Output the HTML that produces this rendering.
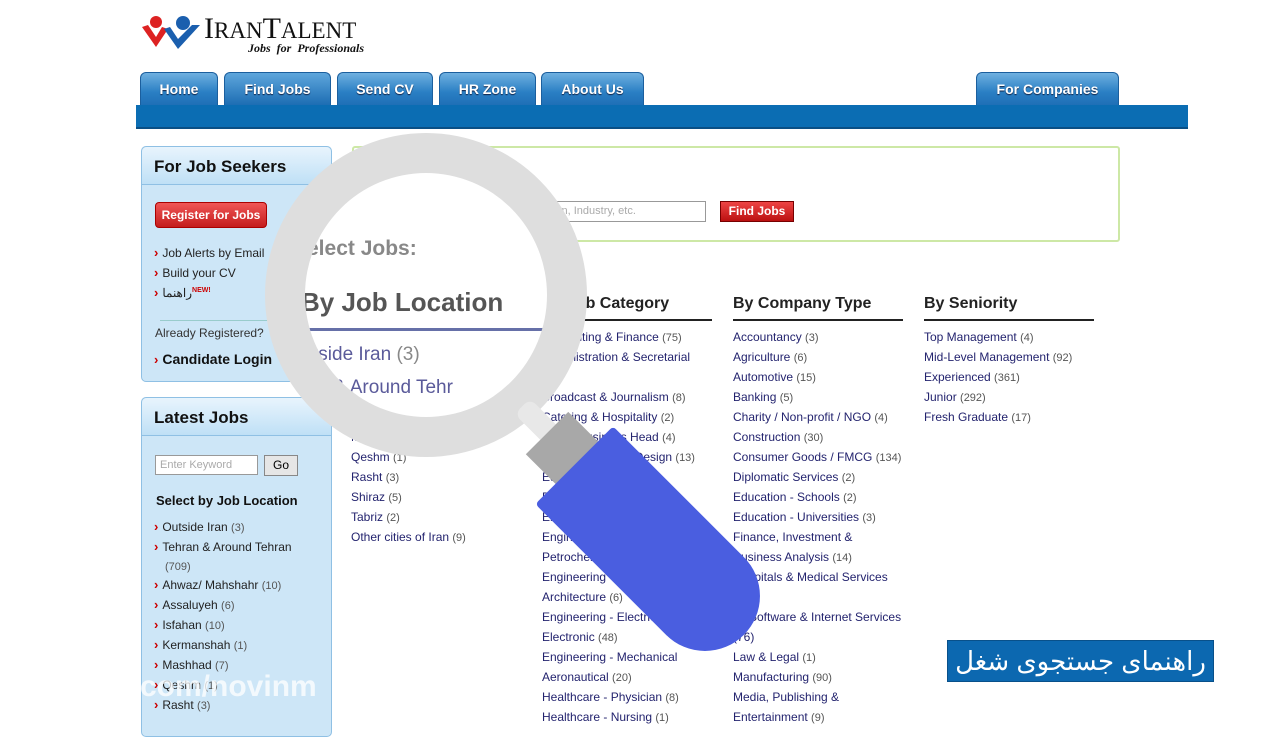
<!DOCTYPE html>
<html><head><meta charset="utf-8">
<style>
*{margin:0;padding:0;box-sizing:border-box}
body{width:1280px;height:720px;overflow:hidden;background:#fff;font-family:"Liberation Sans",Arial,sans-serif;position:relative}
.abs{position:absolute}
.tab{position:absolute;top:72px;height:33px;border-radius:6px 6px 0 0;background:linear-gradient(#6fb0e0,#2a7fc4 60%,#1f6fb6);border:1px solid #1b5f9e;border-bottom:none;color:#fff;font-weight:bold;font-size:14px;text-align:center;line-height:32px;text-shadow:0 1px 1px #124;}
.tab.act{background:linear-gradient(#5ea6dc,#1d6db3);}
.bar{left:136px;top:105px;width:1052px;height:24px;background:#0b6db3;border-bottom:2px solid #0a4f85}
.box{position:absolute;left:141px;width:191px;background:#cde6f7;border:1px solid #8fc0e4;border-radius:5px}
.boxh{height:38px;background:linear-gradient(#e8f4fd,#bfe0f6);border-bottom:1px solid #8fc0e4;font-weight:bold;font-size:17px;line-height:40px;padding-left:12px;color:#111;border-radius:5px 5px 0 0}
.li{position:absolute;font-size:12px;color:#222;white-space:nowrap}
.li b{color:#c00;font-size:13px;margin-right:4px;font-weight:900}
.cnt{color:#555;font-size:11px}
.col{position:absolute;top:295px}
.col h3{font-size:16px;font-weight:bold;color:#222;height:26px;border-bottom:2px solid #222;}
.col div{font-size:12px;color:#23236e;height:20px;line-height:20px;white-space:nowrap}
.col div span{color:#555;font-size:11px}
</style></head><body>
<svg class="abs" style="left:140px;top:15px" width="66" height="36" viewBox="0 0 66 36">
<circle cx="16" cy="7" r="6" fill="#d22"/><path d="M2 12 L16 32 L28 14 L22 12 L16 22 L8 10Z" fill="#d22"/>
<circle cx="43" cy="8" r="7" fill="#1b5fae"/><path d="M24 14 L38 34 L60 10 L52 10 L38 24 L30 12Z" fill="#1b5fae"/>
</svg>
<div class="abs" style="left:204px;top:12px;font-family:'Liberation Serif',serif;font-size:30px;color:#111">I<span style="font-size:23px">RAN</span>T<span style="font-size:23px">ALENT</span></div>
<div class="abs" style="left:248px;top:41px;font-family:'Liberation Serif',serif;font-style:italic;font-weight:bold;font-size:12px;color:#111">Jobs &nbsp;for &nbsp;Professionals</div>

<div class="tab" style="left:140px;width:78px">Home</div>
<div class="tab act" style="left:224px;width:107px">Find Jobs</div>
<div class="tab" style="left:337px;width:96px">Send CV</div>
<div class="tab" style="left:439px;width:97px">HR Zone</div>
<div class="tab" style="left:541px;width:103px">About Us</div>
<div class="tab" style="left:976px;width:143px">For Companies</div>
<div class="abs bar"></div>

<div class="box" style="top:146px;height:236px">
<div class="boxh">For Job Seekers</div>
<div class="abs" style="left:13px;top:55px;width:112px;height:26px;background:linear-gradient(#f05555,#c41d1d);border:1px solid #a00;border-radius:4px;color:#fff;font-weight:bold;font-size:12px;line-height:24px;text-align:center">Register for Jobs</div>
<div class="li" style="left:12px;top:98px"><b>›</b>Job Alerts by Email</div>
<div class="li" style="left:12px;top:118px"><b>›</b>Build your CV</div>
<div class="li" style="left:12px;top:138px;font-family:'Liberation Sans','Noto Sans CJK SC',sans-serif"><b>›</b>راهنما<sup style="color:#c00;font-size:7px;font-weight:bold">NEW!</sup></div>
<div class="abs" style="left:18px;top:173px;width:160px;border-top:1px solid #9cc"></div>
<div class="li" style="left:13px;top:179px;color:#333">Already Registered?</div>
<div class="li" style="left:12px;top:204px;font-weight:bold;font-size:14px;color:#111"><b>›</b>Candidate Login</div>
</div>

<div class="box" style="top:397px;height:340px">
<div class="boxh">Latest Jobs</div>
<div class="abs" style="left:13px;top:57px;width:103px;height:20px;background:#fff;border:1px solid #999;font-size:11px;color:#aaa;line-height:18px;padding-left:4px">Enter Keyword</div>
<div class="abs" style="left:122px;top:57px;width:34px;height:21px;background:#e6e6e6;border:1px solid #888;font-size:12px;line-height:19px;text-align:center">Go</div>
<div class="li" style="left:14px;top:95px;font-weight:bold;font-size:13px;color:#111">Select by Job Location</div>
<div class="li" style="left:12px;top:121px"><b>›</b>Outside Iran <span class="cnt">(3)</span></div>
<div class="li" style="left:12px;top:141px"><b>›</b>Tehran &amp; Around Tehran</div>
<div class="li" style="left:23px;top:161px"><span class="cnt">(709)</span></div>
<div class="li" style="left:12px;top:179px"><b>›</b>Ahwaz/ Mahshahr <span class="cnt">(10)</span></div>
<div class="li" style="left:12px;top:199px"><b>›</b>Assaluyeh <span class="cnt">(6)</span></div>
<div class="li" style="left:12px;top:219px"><b>›</b>Isfahan <span class="cnt">(10)</span></div>
<div class="li" style="left:12px;top:239px"><b>›</b>Kermanshah <span class="cnt">(1)</span></div>
<div class="li" style="left:12px;top:259px"><b>›</b>Mashhad <span class="cnt">(7)</span></div>
<div class="li" style="left:12px;top:279px"><b>›</b>Qeshm <span class="cnt">(1)</span></div>
<div class="li" style="left:12px;top:299px"><b>›</b>Rasht <span class="cnt">(3)</span></div>
</div>

<div class="abs" style="left:352px;top:146px;width:768px;height:96px;border:2px solid #cde8a6;border-radius:3px"></div>
<div class="abs" style="left:540px;top:201px;width:166px;height:21px;border:1px solid #999;font-size:11px;color:#aaa;line-height:19px;padding-left:4px">ision, Industry, etc.</div>
<div class="abs" style="left:720px;top:201px;width:74px;height:21px;background:linear-gradient(#e44,#b11);border:1px solid #700;color:#fff;font-weight:bold;font-size:12px;text-align:center;line-height:19px">Find Jobs</div>

<div class="col" style="left:351px;width:170px">
<h3>By Job Location</h3><div style="margin-top:6px">Outside Iran <span>(3)</span></div><div>Tehran &amp; Around Tehran</div><div></div><div>Isfahan <span>(10)</span></div><div>Kermanshah <span>(1)</span></div><div>Mashhad <span>(7)</span></div><div>Qeshm <span>(1)</span></div><div>Rasht <span>(3)</span></div><div>Shiraz <span>(5)</span></div><div>Tabriz <span>(2)</span></div><div>Other cities of Iran <span>(9)</span></div>
</div>
<div class="col" style="left:542px;width:170px">
<h3>By Job Category</h3><div style="margin-top:6px">Accounting &amp; Finance <span>(75)</span></div><div>Administration &amp; Secretarial</div><div></div><div>Broadcast &amp; Journalism <span>(8)</span></div><div>Catering &amp; Hospitality <span>(2)</span></div><div>CEO / Business Head <span>(4)</span></div><div>Design / Graphic Design <span>(13)</span></div><div>Education <span>(4)</span></div><div>Data Entry <span>(3)</span></div><div>Engineering <span>(8)</span></div><div>Engineering -</div><div>Petrochemical</div><div>Engineering -</div><div>Architecture <span>(6)</span></div><div>Engineering - Electrical</div><div>Electronic <span>(48)</span></div><div>Engineering - Mechanical</div><div>Aeronautical <span>(20)</span></div><div>Healthcare - Physician <span>(8)</span></div><div>Healthcare - Nursing <span>(1)</span></div>
</div>
<div class="col" style="left:733px;width:170px">
<h3>By Company Type</h3><div style="margin-top:6px">Accountancy <span>(3)</span></div><div>Agriculture <span>(6)</span></div><div>Automotive <span>(15)</span></div><div>Banking <span>(5)</span></div><div>Charity / Non-profit / NGO <span>(4)</span></div><div>Construction <span>(30)</span></div><div>Consumer Goods / FMCG <span>(134)</span></div><div>Diplomatic Services <span>(2)</span></div><div>Education - Schools <span>(2)</span></div><div>Education - Universities <span>(3)</span></div><div>Finance, Investment &amp;</div><div>Business Analysis <span>(14)</span></div><div>Hospitals &amp; Medical Services</div><div>(5)</div><div>IT, Software &amp; Internet Services</div><div>(76)</div><div>Law &amp; Legal <span>(1)</span></div><div>Manufacturing <span>(90)</span></div><div>Media, Publishing &amp;</div><div>Entertainment <span>(9)</span></div>
</div>
<div class="col" style="left:924px;width:170px">
<h3>By Seniority</h3><div style="margin-top:6px">Top Management <span>(4)</span></div><div>Mid-Level Management <span>(92)</span></div><div>Experienced <span>(361)</span></div><div>Junior <span>(292)</span></div><div>Fresh Graduate <span>(17)</span></div>
</div>

<div class="abs" style="left:265px;top:133px;width:322px;height:324px;border-radius:50%;border:40px solid #dedede;background:#fff;overflow:hidden">
<div class="abs" style="left:2px;top:64px;font-size:21px;font-weight:bold;color:#888">elect Jobs:</div>
<div class="abs" style="left:-4px;top:114px;font-size:26px;font-weight:bold;color:#555">By Job Location</div>
<div class="abs" style="left:0;top:155px;width:240px;border-top:3px solid #6670a8"></div>
<div class="abs" style="left:8px;top:171px;font-size:19px;color:#5a5a9a">tside Iran <span style="color:#888">(3)</span></div>
<div class="abs" style="left:12px;top:204px;font-size:19px;color:#5a5a9a">n &amp; Around Tehr</div>
</div>
<div class="abs" style="left:512px;top:420px;width:70px;height:22px;background:#e8e8e8;transform:rotate(45deg);border-radius:8px"></div>
<div class="abs" style="left:534px;top:426px;width:60px;height:48px;background:#a8a8a8;transform:rotate(-45deg)"></div>
<div class="abs" style="left:604px;top:430px;width:110px;height:240px;background:#4a5ee0;border-radius:4px 4px 55px 55px;transform:rotate(-45deg)"></div>

<div class="abs" style="left:140px;top:670px;font-size:30px;font-weight:bold;color:rgba(255,255,255,0.75)">com/novinm</div>

<div class="abs" style="left:947px;top:640px;width:267px;height:42px;background:#0c68b0;border:1px solid #08508a;color:#fff;font-size:26px;text-align:center;line-height:40px;font-family:'Liberation Sans','Noto Sans CJK SC','DejaVu Sans',sans-serif" dir="rtl">راهنمای جستجوی شغل</div>
</body></html>
